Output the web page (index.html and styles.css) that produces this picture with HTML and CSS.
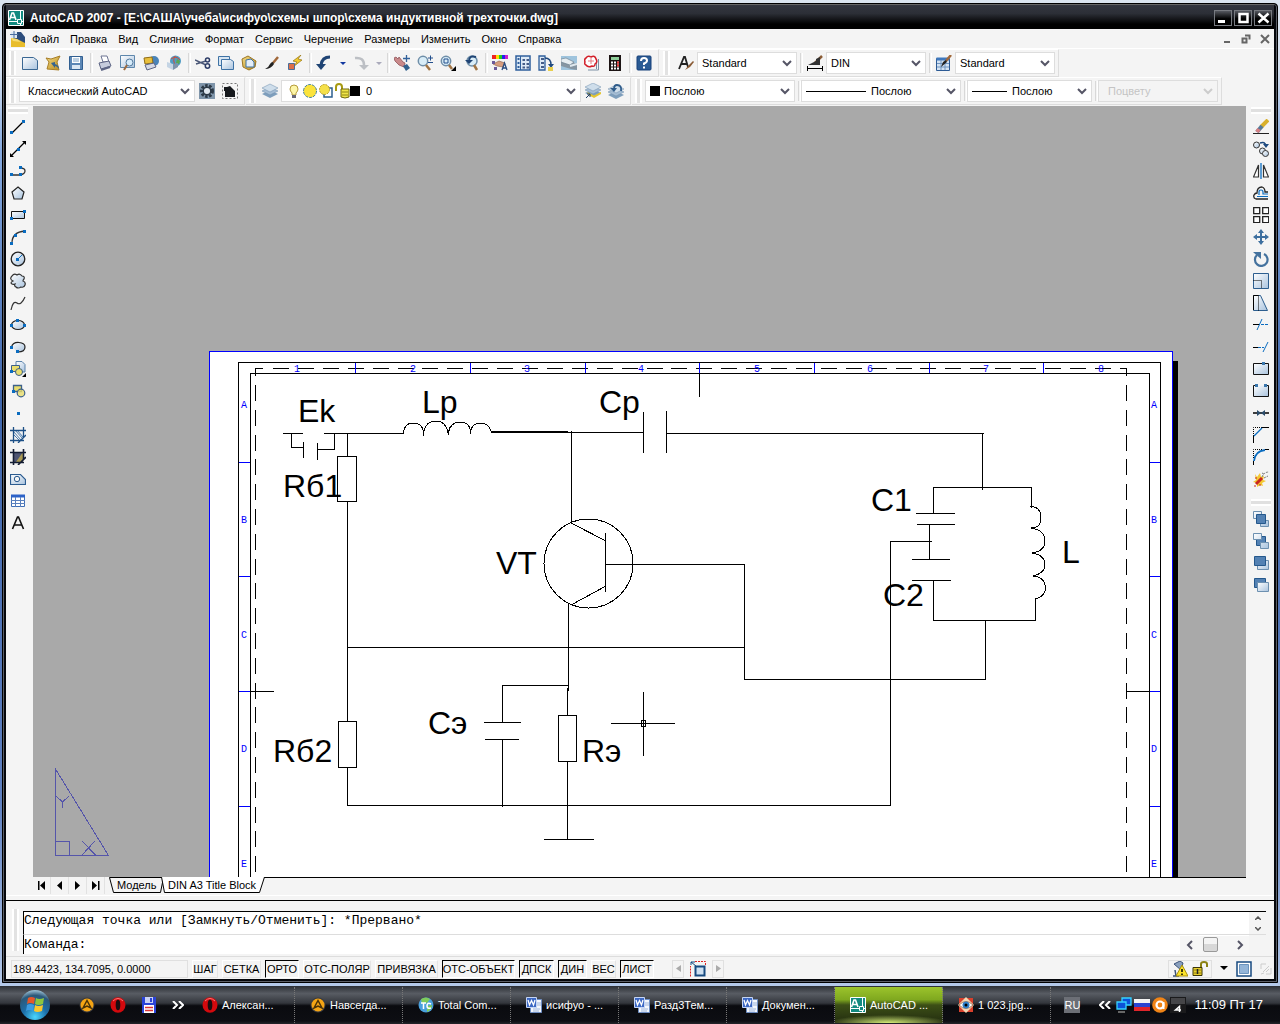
FILE: index.html
```html
<!DOCTYPE html>
<html lang="ru">
<head>
<meta charset="utf-8">
<title>AutoCAD 2007</title>
<link rel="stylesheet" href="styles.css">
</head>
<body>
<svg class="defs" width="0" height="0" aria-hidden="true">
  <defs>
    <linearGradient id="glass" x1="0" y1="0" x2="1" y2="1"><stop offset="0" stop-color="#fff"/><stop offset="1" stop-color="#a9c3de"/></linearGradient>
    <linearGradient id="gold" x1="0" y1="0" x2="1" y2="1"><stop offset="0" stop-color="#f4dc86"/><stop offset="1" stop-color="#b98a1c"/></linearGradient>
    <radialGradient id="orb" cx=".5" cy=".9" r=".9"><stop offset="0" stop-color="#4ad6ff"/><stop offset=".45" stop-color="#1c6ea8"/><stop offset=".8" stop-color="#2c5878"/><stop offset="1" stop-color="#9fc4d8"/></radialGradient>
    <symbol id="cad" viewBox="0 0 16 16"><path fill="#128a80" stroke="#fff" d="M.5.5h15v15H.5z"/><path stroke="#fff" fill="none" d="M12.500 1v8M1 11.500h8M12.500 13v2M14 11.500h1"/><path fill="#128a80" stroke="#fff" d="M9.500 9.500h4v4h-4z"/><path stroke="#fff" stroke-width="1.600" fill="none" d="M1.500 10L4 3h1.500L8 10M3 7.500h4"/></symbol>
    <symbol id="word" viewBox="0 0 16 16"><path fill="#f4f7fc" stroke="#6f8fc4" d="M4.500 2.500h11v13h-11z"/><path stroke="#9db4dc" d="M11 6h4M11 8h4M7 12h7M7 14h6"/><path fill="#3c68c4" stroke="#c5d5f4" d="M.5.5h10v10H.5z"/><path fill="none" stroke="#fff" stroke-width="1.300" d="M2 3l1.500 5L5.500 3.500 7.500 8 9 3"/></symbol>
    <symbol id="opera" viewBox="0 0 16 16"><ellipse cx="8" cy="8" rx="7.500" ry="7.700" fill="#d3090d"/><ellipse cx="8" cy="8" rx="2.300" ry="5.300" fill="#1b0d10"/><path d="M3 4Q8-1 13 4" stroke="#f77" fill="none"/></symbol>
    <symbol id="aimp" viewBox="0 0 16 16"><circle cx="8" cy="8" r="7.500" fill="#3a3a3e"/><circle cx="8" cy="8" r="6.500" fill="#f5a514"/><path d="M4 11l4-7.500L12 11 8 9z" fill="none" stroke="#4a3208" stroke-width="1.500"/></symbol>
    <symbol id="layers" viewBox="0 0 16 16"><path fill="#7f9fbd" d="M0 11l8-4 8 4-8 4z"/><path fill="#a5bdd4" stroke="#6d8dab" stroke-width=".5" d="M0 8l8-4 8 4-8 4z"/><path fill="#cfdeeb" stroke="#6d8dab" stroke-width=".5" d="M0 5l8-4 8 4-8 4z"/></symbol>
    <symbol id="brush" viewBox="0 0 16 16"><path d="M14 2L9 8" stroke="#a1683a" stroke-width="2.500"/><path d="M9 7l1 2Q7 14 1 14q4-2 5-5 1-2 3-2z" fill="#222"/></symbol>
    <symbol id="sheet" viewBox="0 0 16 16"><path fill="url(#glass)" stroke="#3a6793" d="M.5 2.500h11l4 3v9H.5z"/></symbol>
  </defs>
</svg>

<div class="window">
  <header class="titlebar">
    <svg class="ic"><use href="#cad"/></svg>
    <h1>AutoCAD 2007 - [E:\САША\учеба\исифуо\схемы шпор\схема индуктивной трехточки.dwg]</h1>
    <div class="winbtns">
      <button aria-label="Свернуть"><svg width="16" height="14"><path d="M3 10.500h7" stroke="#fff" stroke-width="3"/></svg></button>
      <button aria-label="Развернуть"><svg width="16" height="14"><path d="M4.500 3h8v8h-8z" stroke="#fff" stroke-width="2.500" fill="none"/></svg></button>
      <button aria-label="Закрыть"><svg width="16" height="14"><path d="M3.500 2.500l10 9M13.500 2.500l-10 9" stroke="#fff" stroke-width="2.500"/></svg></button>
    </div>
  </header>

  <nav class="menubar">
    <svg class="ic" viewBox="0 0 16 16"><path fill="#2d4d7c" d="M3 1h8l4 5v8H3z"/><path fill="#dde9f5" d="M1 1h6v6H1z"/><path fill="#e8bd2c" d="M1 7l6 1 8 4v4H1z"/><path fill="#f6dc72" d="M1 7l6 1 4 3-8-1z"/><path d="M4 0v7M0 3.500h8" stroke="#4a6e9f"/></svg>
    <a href="#">Файл</a><a href="#">Правка</a><a href="#">Вид</a><a href="#">Слияние</a><a href="#">Формат</a><a href="#">Сервис</a><a href="#">Черчение</a><a href="#">Размеры</a><a href="#">Изменить</a><a href="#">Окно</a><a href="#">Справка</a>
    <div class="docbtns">
      <button aria-label="Свернуть"><svg width="10" height="10"><path d="M2 8h6" stroke="#666" stroke-width="2"/></svg></button>
      <button aria-label="Восстановить"><svg width="10" height="10"><path d="M1.500 4.500h4v4h-4z M4 1.500h4.500v4" stroke="#666" stroke-width="2" fill="none"/></svg></button>
      <button aria-label="Закрыть"><svg width="10" height="10"><path d="M1 1l8 8M9 1L1 9" stroke="#666" stroke-width="2"/></svg></button>
    </div>
  </nav>

  <div class="toolrow">
    <div class="toolbar">
      <i class="grip"></i>
      <button aria-label="Создать"><svg class="ic"><use href="#sheet"/></svg></button>
      <button aria-label="Открыть"><svg class="ic"><path fill="url(#gold)" stroke="#a77e27" d="M1 3l5 1 9-3-3 6 2 8-12-1 2-7z"/><path d="M6 8l4-1v2q4 1 4 5-2-3-4-3v2z" fill="#35648f"/></svg></button>
      <button aria-label="Сохранить"><svg class="ic"><path fill="#5c87b5" stroke="#315f91" d="M1.500 1.500h13v13h-13z"/><path fill="#fff" d="M4 2h8v6H4z"/><path fill="#dbe7f3" d="M4 10h8v4H4z"/><path d="M5 4h6M5 6h6" stroke="#7ba0c5"/></svg></button>
      <i class="sep"></i>
      <button aria-label="Печать"><svg class="ic"><path fill="#fff" stroke="#6d7593" d="M4 1h6l2 6H6z"/><path fill="#c5cbdc" stroke="#5c6484" d="M2 8l10-2 2 5-10 3z"/><path d="M4 15l9-3" stroke="#5c6484" stroke-width="2"/></svg></button>
      <button aria-label="Просмотр"><svg class="ic"><path fill="url(#glass)" stroke="#5e87ac" d="M.5.500h14v12H.5z"/><circle cx="9.500" cy="7.500" r="3.500" fill="#d6ebfa" stroke="#51789c"/><path d="M7 10l-3 5" stroke="#9c6b41" stroke-width="2"/></svg></button>
      <button aria-label="Публикация"><svg class="ic"><circle cx="11" cy="6" r="5" fill="#4a83b8"/><path fill="#e9bf3d" stroke="#8f6c14" d="M1 3l8-1 1 6-8 1z"/><path fill="#d5d9e6" stroke="#5c6484" d="M2 10l9-2 2 4-9 3z"/></svg></button>
      <button aria-label="3D DWF"><svg class="ic"><circle cx="9.500" cy="6" r="5.500" fill="#4f9cc4"/><path d="M5 4q5-4 9 1M9 1q-3 5 1 10" stroke="#cf4b3a" fill="none"/><path d="M11 4l3 2-1 3-3-1z" fill="#5ba84f"/><path d="M1 7l6 2v6L1 12z" fill="#c4d4e4"/><path d="M7 9l5-1v4l-5 3z" fill="#7d94ab"/></svg></button>
      <i class="sep"></i>
      <button aria-label="Вырезать"><svg class="ic"><path d="M0 5l11 5M1 9l10-3" stroke="#4c5878" stroke-width="1.500"/><circle cx="12.500" cy="5" r="2" fill="none" stroke="#2d3c66" stroke-width="1.500"/><circle cx="12.500" cy="11" r="2.200" fill="none" stroke="#2d3c66" stroke-width="1.500"/></svg></button>
      <button aria-label="Копировать"><svg class="ic"><path fill="#d7e5f2" stroke="#3e72a5" d="M.5 1.500h11v9H.5z"/><path fill="url(#glass)" stroke="#3e72a5" d="M3.500 4.500h9l3 2v8h-12z"/></svg></button>
      <button aria-label="Вставить"><svg class="ic"><path fill="url(#gold)" stroke="#9a7423" d="M1 4l6-3 8 5-1 6-6 3-6-3z"/><path fill="#e4eef8" stroke="#3e72a5" d="M5 5l5-1 3 3v5H5z"/></svg></button>
      <button aria-label="Копирование свойств"><svg class="ic"><use href="#brush"/></svg></button>
      <button aria-label="Редактор блоков"><svg class="ic"><path fill="#f2cc2e" stroke="#967411" stroke-width=".7" d="M14 0L6 6l4 1-4 5 9-7-4-1z"/><path fill="#dd7048" stroke="#4a6d98" d="M1.500 8.500h6v6h-6z"/></svg></button>
      <i class="sep"></i>
      <button aria-label="Отменить"><svg class="ic"><path d="M14 2Q6 2 5 10" fill="none" stroke="#1f4474" stroke-width="3"/><path d="M0 9h10l-5 6z" fill="#1f4474"/></svg></button>
      <button class="drop" aria-label="Список отмены"><svg width="7" height="5"><path d="M1 1h6L4 4z" fill="#1238a0"/></svg></button>
      <button aria-label="Повторить"><svg class="ic"><path d="M2 3Q11 2 11 10" fill="none" stroke="#bcbfc4" stroke-width="2.500"/><path d="M6 10h10l-5 5z" fill="#bcbfc4"/></svg></button>
      <button class="drop drop2" aria-label="Список повтора"><svg width="7" height="5"><path d="M1 1h6L4 4z" fill="#aab"/></svg></button>
      <i class="sep"></i>
      <button aria-label="Панорамирование"><svg class="ic"><path d="M0 3l2-1 2 2 1-2 4 5 2 1-1 4-5-2-4-4z" fill="#c9898a" stroke="#8f5358" stroke-width=".8"/><path d="M9 11l4-2 3 4-4 3z" fill="#31618e"/><path d="M12.500 0v7M9 3.500h7" stroke="#32619a" stroke-width="1.300"/></svg></button>
      <button aria-label="Зум реального времени"><svg class="ic"><circle cx="6" cy="6" r="4.700" fill="#d9edf8" stroke="#6f8ea8" stroke-width="1.500"/><path d="M9 10l4 5" stroke="#a17545" stroke-width="2.500"/><path d="M11 3h5M13.500.500v5M11 7.500h5" stroke="#234f8c"/></svg></button>
      <button aria-label="Показать рамкой"><svg class="ic"><circle cx="6" cy="6" r="4.700" fill="#d9edf8" stroke="#6f8ea8" stroke-width="1.500"/><path d="M4 4h4v4H4z" fill="none" stroke="#234f8c"/><path d="M9 10l3 4" stroke="#a17545" stroke-width="2.500"/><path d="M16 11v5h-5z"/></svg></button>
      <button aria-label="Показать предыдущий"><svg class="ic"><circle cx="9" cy="6" r="5" fill="#d9edf8" stroke="#6f8ea8" stroke-width="1.500"/><path d="M13 2Q6 0 6 6" stroke="#1f4474" stroke-width="2" fill="none"/><path d="M2 5h8l-4 4z" fill="#1f4474"/><path d="M11 10l3 5" stroke="#a17545" stroke-width="2.500"/></svg></button>
      <i class="sep"></i>
      <button aria-label="Свойства"><svg class="ic"><path d="M0 0h4v4H0z" fill="#e22"/><path d="M4 0h3v4H4z" fill="#fd0"/><path d="M7 0h3v4H7z" fill="#2c2"/><path d="M10 0h3v4h-3z" fill="#22e"/><path d="M13 0h3v4h-3z" fill="#c2c"/><path d="M1 9l6-3 6 2-2 4-6-1z" fill="#d79d7e" stroke="#8a5a46" stroke-width=".6"/><path d="M0 6h3v3H0zM2 12h3v3H2z" fill="#6b5a9a"/><path d="M10 15l2.500-7 2.500 7M11 13h3" stroke="#2a4d80" stroke-width="1.300" fill="none"/></svg></button>
      <button aria-label="Центр управления"><svg class="ic"><path fill="#dce9f6" stroke="#2f5f9c" stroke-width="1.500" d="M1 1h14v14H1z"/><path d="M5.500 1v14" stroke="#2f5f9c"/><path d="M2.500 4h2M2.500 8h2M2.500 12h2" stroke="#2f5f9c" stroke-width="2"/><path d="M7.500 5h2.500M11.500 5H14M7.500 9h2.500M11.500 9H14M7.500 12.500h2.500M11.500 12.500H14" stroke="#445c88" stroke-width="2"/></svg></button>
      <button aria-label="Инструментальные палитры"><svg class="ic"><path fill="#dce9f6" stroke="#2f5f9c" stroke-width="1.300" d="M1 1h6v14H1z"/><path d="M3 4h3M3 8h3M3 12h3" stroke="#445c88" stroke-width="2"/><path d="M7 3q6 0 6 7" stroke="#214a7f" stroke-width="1.500" fill="none"/><path d="M10 9h6l-3 4z" fill="#214a7f"/><path d="M10 12h5v4h-5z" fill="#e8cf4e"/></svg></button>
      <button aria-label="Подшивки"><svg class="ic"><path fill="#9fc4dd" d="M0 1h16v14H0z"/><path d="M0 6l4-2 12 5v6l-6-1L0 11z" fill="#8696a3"/><path d="M0 4l5-1 8 4-4 3-9-3z" fill="#e6edf1" stroke="#64798a" stroke-width=".6"/><path d="M9 11l7-2" stroke="#dfe8ee" stroke-width="2"/></svg></button>
      <button aria-label="Пометки"><svg class="ic"><path d="M14.500 4v11H4M12.500 14V4" stroke="#7c8fa3" fill="none"/><path fill="#fff" stroke="#d3202a" stroke-width="1.500" d="M2 3q2-3 5-1 4-2 5 2 2 3-1 5 0 3-3 2-4 2-6-1Q0 9 1 7 0 4 2 3z"/><path d="M4 6h6M7 3v6" stroke="#e67c80"/></svg></button>
      <button aria-label="Калькулятор"><svg class="ic"><path fill="#1c1414" d="M2 0h12v16H2z"/><path fill="#8fce9a" d="M4 2h8v3H4z"/><path d="M4 7.500h8M4 10.500h8M4 13.500h8" stroke="#fff" stroke-width="2" stroke-dasharray="2 1"/><path d="M10 7.500h2M10 10.500h2" stroke="#e33" stroke-width="2"/></svg></button>
      <i class="sep"></i>
      <button aria-label="Справка"><svg class="ic"><rect x="1" y="1" width="14" height="14" rx="1" fill="#2a5b94" stroke="#17407a"/><path d="M5 6q0-3 3-3t3 2.500q0 2-3 3V10M8 11.500v2" stroke="#fff" stroke-width="2" fill="none"/></svg></button>
    </div>
    <div class="toolbar styles">
      <i class="grip"></i>
      <button aria-label="Текстовые стили"><svg class="ic"><path d="M1 14L6 2h1l3 10M3 9h6" stroke="#222" stroke-width="1.800" fill="none"/><path d="M15 6l-5 5-3 4 5-3 4-5z" fill="#8a5b35"/></svg></button>
      <select class="box w100" aria-label="Текстовый стиль"><option>Standard</option></select>
      <i class="sep"></i>
      <button aria-label="Размерные стили"><svg class="ic"><path d="M15 1L8 8" stroke="#8a5b35" stroke-width="2.500"/><path d="M1 10l8-4v4zM9 10V4l4-2v8z" fill="#333"/><path d="M0 13.500h16M.5 11v5M15.500 11v5" stroke="#000"/></svg></button>
      <select class="box w100" aria-label="Размерный стиль"><option>DIN</option></select>
      <i class="sep"></i>
      <button aria-label="Стили таблиц"><svg class="ic"><path fill="#d3e2f2" stroke="#2c5a94" d="M.5 3.500h13v12H.5z"/><path d="M.5 4h13" stroke="#3f78bd" stroke-width="3"/><path d="M1 8.500h12M1 12h12M5 5v10M9 5v10" stroke="#6e94c0"/><path d="M15 0l-5 6" stroke="#a1683a" stroke-width="2.500"/><path d="M10 5l1 2-6 5 2-5z" fill="#222"/></svg></button>
      <select class="box w100" aria-label="Стиль таблиц"><option>Standard</option></select>
    </div>
  </div>

  <div class="toolrow">
    <div class="toolbar">
      <i class="grip"></i>
      <select class="box workspace-pick" aria-label="Рабочее пространство"><option>Классический AutoCAD</option></select>
      <button aria-label="Параметры пространства"><svg class="ic"><path fill="#7f95aa" d="M0 0h16v16H0z"/><circle cx="8" cy="8" r="5.500" fill="none" stroke="#2c3946" stroke-width="3" stroke-dasharray="2.500 1.400"/><circle cx="8" cy="8" r="3.800" fill="#dfe7ee" stroke="#2c3946" stroke-width="1.500"/></svg></button>
      <button aria-label="Моё пространство"><svg class="ic"><path d="M.5.500h15v15H.5z" fill="none" stroke="#777" stroke-dasharray="2 2"/><path d="M2 8V4h3l3-1 5 5v6H3V8z" fill="#16191d"/></svg></button>
    </div>
    <div class="toolbar">
      <i class="grip"></i>
      <button aria-label="Диспетчер слоев"><svg class="ic"><use href="#layers"/></svg></button>
      <div class="box layer-pick">
        <svg class="ic"><path d="M4 6a4 4 0 0 1 8 0q0 2-2 4v2H6v-2Q4 8 4 6z" fill="#fdf6a8" stroke="#b59b3b"/><path d="M6 13.500h4" stroke="#667" stroke-width="3"/></svg>
        <svg class="ic"><circle cx="8" cy="8" r="6.500" fill="#fbe33c" stroke="#3f7e9c" stroke-dasharray="3 1"/></svg>
        <svg class="ic"><path d="M6 5h8v9H6z" fill="#fff" stroke="#2d5f8e" stroke-width="1.500"/><circle cx="6.500" cy="6.500" r="5" fill="#f5e04a" stroke="#b59b1b" stroke-dasharray="2 1"/></svg>
        <svg class="ic"><path d="M2 8V4q0-3 3-3t3 3v5" stroke="#a79a12" stroke-width="2" fill="none"/><path fill="#f0e548" stroke="#6e660c" d="M7 6h8v8l-4 1-4-1z"/><path d="M8 9h6M8 12h6" stroke="#8f8616"/></svg>
        <i class="swatch"></i>
        <select aria-label="Слой"><option>0</option></select>
      </div>
      <button aria-label="Сделать слой текущим"><svg class="ic"><use href="#layers" y="-1"/><path d="M2 9l7 3.500 7-3.500v2l-7 4-5-3z" fill="#e6c62f"/><path d="M1 15l4-4M2 11h3v3" stroke="#1d3c66" fill="none"/></svg></button>
      <button aria-label="Предыдущий слой"><svg class="ic"><use href="#layers" y="1"/><path d="M13 8q1-6-4-6-3 0-3 4" stroke="#2f5c8b" stroke-width="1.800" fill="none"/><path d="M2 5h7l-3 4z" fill="#2f5c8b"/></svg></button>
    </div>
    <div class="toolbar props">
      <i class="grip"></i>
      <div class="box w150"><i class="swatch"></i><select aria-label="Цвет"><option>Послою</option></select></div>
      <i class="sep"></i>
      <div class="box w160"><i class="line line60"></i><select aria-label="Тип линии"><option>Послою</option></select></div>
      <i class="sep"></i>
      <div class="box w125"><i class="line line35"></i><select aria-label="Вес линии"><option>Послою</option></select></div>
      <i class="sep"></i>
      <select class="box w120" aria-label="Стиль печати" disabled><option>Поцвету</option></select>
    </div>
  </div>

  <main class="workspace">
    <div class="side">
      <i class="hgrip"></i>
      <button aria-label="Отрезок"><svg class="ic"><path d="M2 14L14 2" stroke="#000" stroke-width="1.300"/><path d="M0 12h3v3H0zM12 1h3v3h-3z" fill="#0a6cc0"/></svg></button>
      <button aria-label="Прямая"><svg class="ic"><path d="M1 15L15 1" stroke="#000" stroke-width="1.300"/><path d="M0 16v-4l4 4zM16 0v4l-4-4z"/><path d="M7 7h3v3H7z" fill="#0a6cc0"/></svg></button>
      <button aria-label="Полилиния"><svg class="ic"><path d="M1 12h9q5-1 5-4t-5-3" stroke="#333" fill="none" stroke-width="1.300"/><path d="M0 10h3v3H0zM9 10h3v3H9zM9 3h3v3H9z" fill="#0a6cc0"/></svg></button>
      <button aria-label="Многоугольник"><svg class="ic"><path d="M8 2l6 5-2 7H4L2 7z" fill="url(#glass)" stroke="#222" stroke-width="1.200"/></svg></button>
      <button aria-label="Прямоугольник"><svg class="ic"><path d="M1.500 4.500h13v7h-13z" fill="url(#glass)" stroke="#111"/><path d="M0 10h3v3H0zM13 3h3v3h-3z" fill="#0a6cc0"/></svg></button>
      <button aria-label="Дуга"><svg class="ic"><path d="M2 14Q2 3 15 2" stroke="#333" fill="none" stroke-width="1.300"/><path d="M0 13h3v3H0zM4 5h3v3H4zM13 1h3v3h-3z" fill="#0a6cc0"/></svg></button>
      <button aria-label="Круг"><svg class="ic"><circle cx="8" cy="8" r="6.800" fill="url(#glass)" stroke="#222" stroke-width="1.300"/><path d="M8 8l4-4" stroke="#0a6cc0"/><path d="M6 7h3v3H6z" fill="#0a6cc0"/></svg></button>
      <button aria-label="Облако"><svg class="ic"><path d="M3 8Q-1 6 2 3q2-3 5-1 3-2 5 1 3 0 2 3-1 1-1 2 3 1 2 4-1 3-4 2-3 2-5 0-2-1-1-3-3 1-4-1 0-1 2-2z" fill="url(#glass)" stroke="#333" stroke-width="1.200"/></svg></button>
      <button aria-label="Сплайн"><svg class="ic"><path d="M1 15Q3 5 7 8t8-6" stroke="#333" fill="none" stroke-width="1.200"/></svg></button>
      <button aria-label="Эллипс"><svg class="ic"><ellipse cx="8" cy="8" rx="6.500" ry="4.500" fill="url(#glass)" stroke="#222" stroke-width="1.200"/><path d="M0 7h3v3H0zM13 7h3v3h-3zM6 2h3v3H6z" fill="#0a6cc0"/></svg></button>
      <button aria-label="Эллиптическая дуга"><svg class="ic"><path d="M1.500 8Q3 3 9 3.500q6 .5 6 4.500 0 5-7 5" fill="url(#glass)" stroke="#222" stroke-width="1.200"/><path d="M0 7h3v3H0zM6 11h3v3H6z" fill="#0a6cc0"/></svg></button>
      <button aria-label="Вставить блок"><svg class="ic"><path d="M6 .5h6l3 3V11H6z" fill="url(#glass)" stroke="#5b83ab"/><path d="M1.500 4.500h8v6h-8z" fill="#e9dd6d" stroke="#3d618a"/><circle cx="9" cy="11" r="3.500" fill="#e9dd6d" stroke="#3d618a"/><path d="M0 9h3v3H0z" fill="#0a6cc0"/><path d="M16 12v4h-4z"/></svg></button>
      <button aria-label="Создать блок"><svg class="ic"><path d="M3.500 2.500h8v6h-8z" fill="#e9dd6d" stroke="#3d618a" stroke-width="1.300"/><circle cx="11" cy="10" r="3.800" fill="#e9dd6d" fill-opacity=".8" stroke="#3d618a" stroke-width="1.200"/><path d="M2 7h3v3H2z" fill="#0a6cc0"/></svg></button>
      <button aria-label="Точка"><svg class="ic"><path d="M7 7h3v3H7z" fill="#0a6cc0"/></svg></button>
      <button aria-label="Штриховка"><svg class="ic"><path d="M3 4l8 9M5 3l8 9M7 3l6 7M3 7l6 6" stroke="#4b7bae"/><path d="M0 3.500h16M0 13.500h14M3.500 0v16M13.500 0v11M8 16l8-8" stroke="#1c4f86" stroke-width="1.300"/></svg></button>
      <button aria-label="Градиент"><svg class="ic"><path d="M3 3h10v10H3z" fill="#4d5472"/><path d="M13 3v10H6z" fill="#aa9a53"/><path d="M0 3.500h16M0 13.500h14M3.500 0v16M13.500 0v11M8 16l8-8" stroke="#131c33" stroke-width="1.600"/></svg></button>
      <button aria-label="Область"><svg class="ic"><path d="M.5 3.500h10l5 5v5H.5z" fill="url(#glass)" stroke="#2c5c90" stroke-width="1.200"/><circle cx="7" cy="8" r="2.700" fill="#f4f4f4" stroke="#2c5c90"/></svg></button>
      <button aria-label="Таблица"><svg class="ic"><path d="M1.500 2.500h13v11h-13z" fill="#fff" stroke="#3f6eb5"/><path d="M1 3h14" stroke="#2c62c8" stroke-width="3"/><path d="M1 7.500h14M1 10.500h14M5.500 4v10M10.500 4v10" stroke="#5a80bd"/></svg></button>
      <button aria-label="Многострочный текст"><svg class="ic"><path d="M2.500 14L7.500 2h1l5 12M4.500 10h7" stroke="#111" stroke-width="1.600" fill="none"/></svg></button>
    </div>

    <section class="center">
      <svg class="canvas" role="img" aria-label="Схема индуктивной трехточки">
        <g transform="translate(-33 -106)">
          <g shape-rendering="crispEdges" fill="none" stroke="#000">
            <path fill="#000" stroke="none" d="M1173 361h5v600h-5z"/>
            <path fill="#fff" stroke="#00f" d="M209.500 960V351.500h963V960"/>
            <path d="M238.500 960V362.500h922V960M250.500 960V373.500h899V960"/>
            <path d="M255.500 376v-7.500h7M1126.500 376v-7.500h-7"/>
            <path d="M273 368.500h838" stroke-dasharray="16 8.900"/>
            <path d="M255.500 385v492M1126.500 385v492" stroke-dasharray="16 8.800"/>
            <path stroke="#00f" d="M355.500 363v10M470.500 363v10M585.500 363v10M699.500 363v10M814.500 363v10M929.500 363v10M1043.500 363v10M239 462.500h11M239 576.500h11M239 691.500h11M239 806.500h11M1150 462.500h10M1150 576.500h10M1150 691.500h10M1150 806.500h10"/>
            <path d="M699.500 374v23M251 691.500h23M1126 691.500h24"/>
            <path d="M283 433.500h20M324 433.500h79M291.500 433v14.500h12M303.500 442v16M317.500 443v17M317 449.500h17.500V433M347.500 433v23M337.500 456.500h19v45h-19zM347.500 502v219M338.500 721.500h18v46h-18zM347.500 768v37.500h543V541.500h41M347 647.500h398"/>
            <path d="M491 432h77" stroke-width="2"/>
            <path d="M568 432.500h75M571.500 431v92M605.500 533v59M605 564.500h139.500v115h241V620M568.500 603v88M643.500 412v41M666.500 411v42M666 433.500h318M982.500 433v57M933.500 513v-25.500h98V508M916 513.500h39M917 524.500h38M929.500 524v36M912 559.500h38M912 580.500h39M933.500 580v40.500h102V599M568 685.500h-65.500V722M484 722.500h37M485 739.500h34M502.500 739v68M567.500 688v27M558.500 715.500h18v46h-18zM567.500 762v77M544 839.500h50"/>
            <path d="M403.500 434q0-11 10-11t10.500 13M423.500 433q2-12 12.500-12t12.500 14M448.500 432q2-10 12-10t10 12M470.500 431q2-8 10-8t11 9M571 523l35 18M606 586l-35 19"/>
            <circle cx="588.500" cy="563.500" r="44.500"/>
            <path d="M1030 506.500q11 0 11 11t-10 10M1031 528q14 2 14 13 0 10-13 12M1032 553q13 2 13 12 0 8-12 11M1033 576q12 1 12.500 12 0 8-10 11"/>
            <path d="M643.500 692v64M611 723.500h64M641.500 720.500h4v6h-4z"/>
            <path stroke="#55a" d="M55.500 769v86.500h53zM56 841.500h13.500V855M56 796l6.500 6 6.500-6M62.500 802v6M82 841l13.500 14M95 841l-13 14"/>
          </g>
          <g class="zone">
            <text x="297" y="372">1</text><text x="413" y="372">2</text><text x="527" y="372">3</text><text x="641" y="372">4</text><text x="757" y="372">5</text><text x="870" y="372">6</text><text x="986" y="372">7</text><text x="1101" y="372">8</text>
            <text x="244" y="408">A</text><text x="244" y="523">B</text><text x="244" y="638">C</text><text x="244" y="752">D</text><text x="244" y="867">E</text>
            <text x="1154" y="408">A</text><text x="1154" y="523">B</text><text x="1154" y="638">C</text><text x="1154" y="752">D</text><text x="1154" y="867">E</text>
          </g>
          <g class="label">
            <text x="298" y="422">Ek</text><text x="422" y="413">Lp</text><text x="599" y="413">Cp</text><text x="283" y="497">Rб1</text><text x="496" y="574">VT</text><text x="871" y="511">C1</text><text x="883" y="606">C2</text><text x="1062" y="563">L</text><text x="428" y="734">Cэ</text><text x="582" y="762">Rэ</text><text x="273" y="762">Rб2</text>
          </g>
        </g>
      </svg>
      <div class="tabs">
        <button class="nav" aria-label="Первый"><svg width="9" height="9"><path d="M1 0h1.500v9H1zM8 0v9L3 4.500z"/></svg></button>
        <button class="nav" aria-label="Назад"><svg width="9" height="9"><path d="M7 0v9L2 4.500z"/></svg></button>
        <button class="nav" aria-label="Вперед"><svg width="9" height="9"><path d="M2 0v9l5-4.500z"/></svg></button>
        <button class="nav" aria-label="Последний"><svg width="9" height="9"><path d="M1 0v9l5-4.500zM7 0h1.500v9H7z"/></svg></button>
        <a class="tab model" href="#"><svg class="edge" width="54" height="16"><path d="M.5.500l4 15h47l3-15z" fill="#f4f4f4" stroke="#000"/></svg>Модель</a>
        <a class="tab active" href="#"><svg class="edge" width="104" height="16"><path d="M.5 0l3 15.500h95L103.500 0" fill="#fff" stroke="#000"/></svg>DIN A3 Title Block</a>
        <i class="tabfill"></i>
      </div>
    </section>

    <div class="side right">
      <i class="hgrip"></i>
      <button aria-label="Стереть"><svg class="ic"><path d="M0 14.500h16" stroke="#222"/><path d="M15 1L8 8" stroke="#d8b02c" stroke-width="4"/><path d="M9 7l-5 6" stroke="#557a9a" stroke-width="4"/><path d="M6 10l-2 3" stroke="#d67f83" stroke-width="4"/></svg></button>
      <button aria-label="Копировать"><svg class="ic"><circle cx="3.500" cy="4" r="3" fill="url(#glass)" stroke="#333"/><circle cx="9.500" cy="10" r="3" fill="url(#glass)" stroke="#333"/><circle cx="12.500" cy="12.500" r="3" fill="url(#glass)" stroke="#333"/><path d="M7 2q5-2 6 3" stroke="#1e4a80" stroke-width="1.500" fill="none"/><path d="M10 3h6l-3 4z" fill="#1e4a80"/></svg></button>
      <button aria-label="Зеркало"><svg class="ic"><path d="M5.500 2v12h-5zM10.500 2v12h5z" fill="#fff" stroke="#333" stroke-width="1.200"/><path d="M8 0v16" stroke="#0a6cc0" stroke-width="1.300"/></svg></button>
      <button aria-label="Подобие"><svg class="ic"><path d="M15 14H3q-3-1-2-4 1-2 3-2 0-6 5-6 3 1 3 5h3" fill="none" stroke="#222" stroke-width="1.300"/><path d="M15 11.500H4M6 10V7q0-2 2-2t2 2v2h5" fill="none" stroke="#0a6cc0" stroke-width="1.200"/></svg></button>
      <button aria-label="Массив"><svg class="ic"><path d="M.7.700h6v6h-6zM9.700.700h6v6h-6zM.7 9.700h6v6h-6zM9.700 9.700h6v6h-6z" fill="#fff" stroke="#222" stroke-width="1.300"/></svg></button>
      <button aria-label="Перенести"><svg class="ic"><path d="M8 2v12M2 8h12" stroke="#3d6f9f" stroke-width="2"/><path d="M8 0l3 4H5zM8 16l3-4H5zM0 8l4-3v6zM16 8l-4-3v6z" fill="#3d6f9f"/></svg></button>
      <button aria-label="Повернуть"><svg class="ic"><path d="M4 4a6.300 6.300 0 1 0 7-1" fill="none" stroke="#44729e" stroke-width="2.200"/><path d="M0 1h8v7z" fill="#44729e"/></svg></button>
      <button aria-label="Масштаб"><svg class="ic"><path d="M.5.500h15v15H.5z" fill="url(#glass)" stroke="#2d5e8f"/><path d="M.5 7.500h8v8" fill="none" stroke="#000" stroke-dasharray="1 1"/></svg></button>
      <button aria-label="Растянуть"><svg class="ic"><path d="M.5.500h5l2 0 7 15H.5z" fill="url(#glass)" stroke="#2d5e8f"/><path d="M.5 15V.5h5" fill="none" stroke="#000"/><path d="M5.500.500v15" stroke="#000" stroke-dasharray="1 1"/></svg></button>
      <button aria-label="Обрезать"><svg class="ic"><path d="M0 7.500h6" stroke="#000"/><path d="M4 13l5-11" stroke="#0a6cc0"/><path d="M8 7.500h8" stroke="#0a6cc0" stroke-dasharray="3 1"/></svg></button>
      <button aria-label="Удлинить"><svg class="ic"><path d="M0 8.500h5" stroke="#000"/><path d="M5 8.500h6" stroke="#0a6cc0" stroke-dasharray="3 1"/><path d="M10 13l5-10" stroke="#0a6cc0"/></svg></button>
      <button aria-label="Разорвать в точке"><svg class="ic"><path d="M.5 2.500h15v11H.5z" fill="url(#glass)" stroke="#111"/><path d="M9 1h3v3H9z" fill="#3a77ad"/></svg></button>
      <button aria-label="Разорвать"><svg class="ic"><path d="M4 2.500H.5v11h15v-11H12" fill="url(#glass)" stroke="#111"/><path d="M2 1h3v3H2zM11 1h3v3h-3z" fill="#3a77ad"/></svg></button>
      <button aria-label="Соединить"><svg class="ic"><path d="M0 8h16" stroke="#000" stroke-width="1.500"/><path d="M4 5l4 3-4 3zM12 5L8 8l4 3z" fill="#2b4c6b"/></svg></button>
      <button aria-label="Фаска"><svg class="ic"><path d="M.5 16V9M9 .5h7" stroke="#000"/><path d="M.5 9V.5H9" fill="none" stroke="#000" stroke-dasharray="1 1"/><path d="M1 9l8-8" stroke="#0a6cc0" stroke-width="1.300"/></svg></button>
      <button aria-label="Сопряжение"><svg class="ic"><path d="M.5 16v-4M12 .5h4" stroke="#000"/><path d="M.5 9V.5H9" fill="none" stroke="#000" stroke-dasharray="1 1"/><path d="M1 12Q2 2 12 1" fill="none" stroke="#0a6cc0" stroke-width="1.800"/></svg></button>
      <button aria-label="Расчленить"><svg class="ic"><path d="M2 3l2 3 3-4 1 4 3-1-1 4 3 1-4 2 1 3-3-1-3 2v-4L0 11l3-2z" fill="#f3c832"/><path d="M3 13l6-6" stroke="#c8261f" stroke-width="3"/><path d="M2 7h2M6 14h2M1 15h2" stroke="#c8261f"/><path d="M9 6q2-5 7-5M11 7l4-2M9 2l2 1" stroke="#777" fill="none" stroke-dasharray="2 1"/></svg></button>
      <i class="hgrip second"></i>
      <button aria-label="На передний план"><svg class="ic"><path d="M.5.500h8v7h-8zM7.500 9.500h8v6h-8z" fill="url(#glass)" stroke="#6d90b0"/><path d="M3.500 3.500h9v9h-9z" fill="#5381b3" stroke="#25588c"/></svg></button>
      <button aria-label="На задний план"><svg class="ic"><path d="M3.500 3.500h9v9h-9z" fill="#5381b3" stroke="#25588c"/><path d="M.5.500h8v6h-8zM7.500 9.500h8v6h-8z" fill="url(#glass)" stroke="#6d90b0"/></svg></button>
      <button aria-label="Перед объектом"><svg class="ic"><path d="M4.500 5.500h11v9h-11z" fill="url(#glass)" stroke="#6d90b0"/><path d="M1.500 1.500h11v9h-11z" fill="#5381b3" stroke="#25588c"/></svg></button>
      <button aria-label="За объектом"><svg class="ic"><path d="M1.500 1.500h11v9h-11z" fill="#5381b3" stroke="#25588c"/><path d="M4.500 5.500h11v9h-11z" fill="url(#glass)" stroke="#6d90b0"/></svg></button>
    </div>
  </main>

  <section class="dock">
    <i class="grip"></i>
    <div class="console">
      <div class="history"><output>Следующая точка или [Замкнуть/Отменить]: *Прервано*</output>
        <div class="vscroll"><svg width="6" height="4"><path d="M0 4l3-3 3 3" stroke="#555" stroke-width="1.500" fill="none"/></svg><svg width="6" height="4"><path d="M0 0l3 3 3-3" stroke="#555" stroke-width="1.500" fill="none"/></svg></div>
      </div>
      <div class="prompt"><label for="cmd">Команда:</label><input id="cmd" type="text">
        <div class="hscroll"><svg width="8" height="10"><path d="M6 1L2 5l4 4" stroke="#556" stroke-width="2" fill="none"/></svg><button aria-label="Прокрутка"></button><svg width="8" height="10"><path d="M2 1l4 4-4 4" stroke="#556" stroke-width="2" fill="none"/></svg></div>
      </div>
    </div>
  </section>

  <footer class="status">
    <span class="coords">189.4423, 134.7095, 0.0000</span>
    <button class="m26">ШАГ</button><button class="m39">СЕТКА</button><button class="m34 on">ОРТО</button><button class="m68">ОТС-ПОЛЯР</button><button class="m63">ПРИВЯЗКА</button><button class="m73 on">ОТС-ОБЪЕКТ</button><button class="m35 on">ДПСК</button><button class="m29 on">ДИН</button><button class="m25">ВЕС</button><button class="m34 on">ЛИСТ</button>
    <div class="vp">
      <button aria-label="Предыдущий вид"><svg width="5" height="7"><path d="M5 0v7L0 3.500z" fill="#aaa"/></svg></button>
      <svg class="ic"><path d="M.5 15.500V5M5 .5h10.500V5" stroke="#d22" fill="none" stroke-dasharray="2 1"/><path d="M5.500 5.500h9v9h-9z" fill="#cfe0f0" stroke="#174a80" stroke-width="2"/><path d="M1 1l5 4M1 4V1h4" stroke="#174a80" fill="none"/></svg>
      <button aria-label="Следующий вид"><svg width="5" height="7"><path d="M0 0v7l5-3.500z" fill="#aaa"/></svg></button>
    </div>
    <div class="notify">
      <div class="well">
        <svg class="ic"><path d="M2 3l7 6 2-7-3-2z" fill="#8aa0bd" stroke="#3c5279"/><path d="M1 15h6M3 9l1 6" stroke="#3c5279" stroke-width="1.500"/><path d="M10 4l6 11H4z" fill="#fbe329" stroke="#a58b0d"/><path d="M10 8v3M10 12.500v1.500" stroke="#000" stroke-width="1.500"/></svg>
        <svg class="ic"><path d="M9 7V3q0-2 3-2t3 2v3" stroke="#8a8012" stroke-width="2" fill="none"/><path fill="#e8cf2e" stroke="#3a3407" d="M1 6.500h9v8H1z"/><path d="M1 9h9M1 12h9" stroke="#8f7f14"/><path d="M5.500 8v5" stroke="#222" stroke-width="1.500"/></svg>
      </div>
      <svg width="8" height="5"><path d="M0 0h8L4 4z"/></svg>
      <svg class="ic"><path d="M1 1h14v14H1z" fill="#fff" stroke="#174a80" stroke-width="1.500"/><path d="M3.500 3.500h9v9h-9z" fill="#94b5d8" stroke="#6b93bd"/></svg>
      <svg width="12" height="12"><path d="M1 1h5M1 1v5M11 11H6M11 11V5M3 9l6-6M1 11l3-1M6 9l3-3" stroke="#ccc" fill="none"/></svg>
    </div>
  </footer>
</div>

<div class="taskbar">
  <button class="start" aria-label="Пуск"><svg width="32" height="32"><circle cx="16" cy="16" r="15" fill="url(#orb)"/><path d="M9 9q3-2 7 0l-1 6q-4-2-7 0z" fill="#e5582a"/><path d="M17 9q3 2 8 0l-1 6q-5 2-8 0z" fill="#8cc63f"/><path d="M8 16q3-2 7 0l-1 6q-4-2-7 0z" fill="#3d9be0"/><path d="M16 16q3 2 8 0l-1 6q-5 2-8 0z" fill="#fbc62d"/></svg></button>
  <div class="quick">
    <button aria-label="AIMP"><svg class="ic"><use href="#aimp"/></svg></button>
    <button aria-label="Opera"><svg class="ic"><use href="#opera"/></svg></button>
    <button aria-label="Сохранение"><svg class="ic"><path d="M1 0h14v16H1z" fill="#2b44d8"/><path d="M4 0h8v6H4z" fill="#c9d2f4"/><path d="M9 1h2v4H9z" fill="#2b44d8"/><path d="M3 8h10v8H3z" fill="#fff"/><path d="M4 10.500h8M4 13.500h8" stroke="#d33" stroke-width="1.500"/></svg></button>
    <button aria-label="Ещё"><svg width="12" height="8"><path d="M1 0l4 4-4 4M7 0l4 4-4 4" stroke="#fff" stroke-width="2" fill="none"/></svg></button>
  </div>
  <button class="task"><svg class="ic"><use href="#opera"/></svg>Алексан...</button>
  <button class="task"><svg class="ic"><use href="#aimp"/></svg>Навсегда...</button>
  <button class="task"><svg class="ic"><circle cx="8" cy="8" r="7.500" fill="#4aa0dc"/><path d="M3 2q5-3 9 0l-3 4-5 1zM9 9l5-1q0 5-5 7z" fill="#7ecb5a"/><path d="M3 6h5M5.500 6v6M13 7q-4-2-4 2 0 3 4 2" stroke="#fff" stroke-width="1.500" fill="none"/></svg>Total Com...</button>
  <button class="task"><svg class="ic"><use href="#word"/></svg>исифуо - ...</button>
  <button class="task"><svg class="ic"><use href="#word"/></svg>Разд3Тем...</button>
  <button class="task"><svg class="ic"><use href="#word"/></svg>Докумен...</button>
  <button class="task current"><svg class="ic"><use href="#cad"/></svg>AutoCAD ...</button>
  <button class="task"><svg class="ic"><path d="M1 1h14v14H1z" fill="#d9402c"/><path d="M8 0l8 8-8 8-8-8z" fill="#f2d8b4"/><path d="M1 8q7-7 14 0-7 7-14 0z" fill="#fff" stroke="#8a4a2a" stroke-width=".7"/><circle cx="8" cy="8" r="3.500" fill="#2f7fc8"/><circle cx="8" cy="8" r="1.500"/></svg>1 023.jpg...</button>
  <div class="tray">
    <button class="lang">RU</button>
    <svg class="more" width="12" height="8"><path d="M5 0L1 4l4 4M11 0L7 4l4 4" stroke="#fff" stroke-width="2" fill="none"/></svg>
    <svg class="ic"><path d="M6 1h9v7H6z" fill="#0b52d8" stroke="#36d3ff" stroke-width="1.300"/><path d="M1 5h9v7H1z" fill="#0b52d8" stroke="#36d3ff" stroke-width="1.300"/><path d="M2 15h7" stroke="#666" stroke-width="2"/></svg>
    <svg class="ic"><path d="M0 2h16v4H0z" fill="#f4f4f4"/><path d="M0 6h16v4H0z" fill="#2c45d2"/><path d="M0 10h16v4H0z" fill="#e0252b"/></svg>
    <svg class="ic"><circle cx="8" cy="8" r="7.800" fill="#f08416"/><circle cx="8" cy="8" r="3.500" fill="none" stroke="#fff" stroke-width="2.200"/><path d="M11.500 5v7" stroke="#fff" stroke-width="2"/></svg>
    <svg class="ic"><path d="M0 0h16v16H0z" fill="#1a1a1c"/><path d="M1 1h14v6H1z" fill="#454548"/><path d="M9.500 15V9.500L5.500 13h5.500" stroke="#fff" stroke-width="1.500" fill="none"/></svg>
    <time>11:09 Пт 17</time>
  </div>
</div>
</body>
</html>
```
FILE: styles.css
```css
* { box-sizing: border-box; }

body {
  margin: 0;
  min-height: 100vh;
  display: flex;
  flex-direction: column;
  background: linear-gradient(#dbe5f0 0, #d4e0f0 70px, #86aae0 150px, #3f66ac 400px, #5f80c0 800px, #c6d8f2 100%);
  color: #000;
  font: 11px/14px "Liberation Sans", Arial, sans-serif;
}

.defs { position: absolute; }
button, select, input { font: inherit; color: inherit; margin: 0; padding: 0; border: 0; background: none; border-radius: 0; }
button { display: flex; align-items: center; justify-content: center; flex: none; }
a { color: inherit; text-decoration: none; }
svg { display: block; flex: none; }
.ic { width: 16px; height: 16px; }

.window {
  flex: 1;
  display: flex;
  flex-direction: column;
  margin: 3px 2px 3px 2px;
  padding: 0 3px 3px;
  border: 1px solid #000;
  border-radius: 4px 4px 0 0;
  background: #05070c;
  box-shadow: inset 0 0 0 1px #5b5e66;
}

/* title and menu */
.titlebar {
  display: flex;
  align-items: center;
  height: 25px;
  padding: 1px 2px 0;
  background: linear-gradient(#33363f, #2c2f37 35%, #000 80%);
  border-top: 1px solid #666;
  color: #fff;
}
.titlebar h1 { margin: 0 0 0 6px; font-size: 12px; line-height: 16px; font-weight: bold; white-space: nowrap; }
.winbtns { display: flex; gap: 2px; margin-left: auto; }
.winbtns button { width: 18px; height: 16px; border: 1px solid #777a80; background: linear-gradient(#55585f, #000 55%); }

.menubar { display: flex; align-items: center; gap: 11px; height: 20px; padding: 0 4px; background: #f4f4f4; border-bottom: 1px solid #fff; }
.menubar .ic { margin-right: -5px; }
.docbtns { display: flex; gap: 9px; margin-left: auto; }

/* toolbars */
.toolrow { display: flex; height: 28px; background: #f4f4f4; }
.toolbar { display: flex; align-items: center; padding-left: 3px; padding-right: 3px; border-right: 1px solid #ddd; border-bottom: 1px solid #ddd; border-top: 1px solid #fff; margin-right: 1px; }
.grip { width: 7px; height: 24px; margin-right: 2px; border: solid #fff; border-width: 0 2px; background: #e2e2e2; flex: none; }
.toolbar > button { width: 23px; height: 24px; }
.toolbar > button.drop { width: 14px; }
.toolbar > button.drop2 { width: 12px; }
.sep { width: 6px; height: 20px; border-right: 1px solid #fff; background: linear-gradient(90deg, transparent 3px, #d8d8d8 3px, #d8d8d8 4px, transparent 4px); flex: none; }

.box {
  height: 22px;
  border: 1px solid #ddd;
  background-color: #fff;
  display: flex;
  align-items: center;
}
select {
  appearance: none;
  background: url("data:image/svg+xml,%3Csvg xmlns='http://www.w3.org/2000/svg' width='10' height='7'%3E%3Cpath d='M1 1l4 4 4-4' fill='none' stroke='%23556' stroke-width='2'/%3E%3C/svg%3E") no-repeat right 4px center;
}
select:disabled { color: #c4c4c4; opacity: 1; background-color: #f4f4f4; background-image: url("data:image/svg+xml,%3Csvg xmlns='http://www.w3.org/2000/svg' width='10' height='7'%3E%3Cpath d='M1 1l4 4 4-4' fill='none' stroke='%23ccc' stroke-width='2'/%3E%3C/svg%3E"); }
select.box { padding: 0 20px 0 4px; }
div.box { padding-left: 4px; }
div.box select { flex: 1; height: 20px; padding-left: 4px; }
.styles .grip { margin-right: 4px; }
.props .grip { margin-right: 3px; }
.w100 { width: 100px; }
.w120 { width: 120px; }
.w125 { width: 125px; }
.w150 { width: 150px; }
.w160 { width: 160px; }
select.workspace-pick { width: 176px; margin-left: 1px; padding-left: 8px; }
select.w120 { padding-left: 9px; }
.layer-pick { width: 300px; }
div.layer-pick select { padding-left: 6px; }
.swatch { width: 10px; height: 10px; background: #000; flex: none; }
.line { height: 1px; background: #000; flex: none; }
.line60 { width: 60px; margin-right: 1px; }
.line35 { width: 35px; margin-right: 1px; }

/* drawing area with side toolbars */
.workspace { flex: 1; display: grid; grid-template-columns: 27px 1fr 28px; padding-top: 1px; background: #f4f4f4; border-bottom: 1px solid #fff; }
.side { display: flex; flex-direction: column; align-items: center; padding-right: 3px; }
.side.right { padding: 0 0 0 2px; }
.side button { width: 23px; height: 22px; }
.hgrip { width: 20px; height: 7px; margin: 1px 0 2px; border: solid #fff; border-width: 2px 0; background: #e0e0e0; }
.hgrip.second { margin: 9px 0 2px; }
.center { display: flex; flex-direction: column; min-width: 0; }
.canvas { flex: 1; width: 100%; height: auto; min-height: 0; background: #a9a9a9; overflow: hidden; }
.zone { fill: #00f; font: 10px/12px "Liberation Mono", monospace; text-anchor: middle; }
.label { font: 32px/36px "Liberation Sans", Arial, sans-serif; }

.tabs { display: flex; height: 18px; }
.nav { width: 18px; height: 17px; border-right: 1px solid #e2e2e2; }
.tab { position: relative; z-index: 0; height: 16px; line-height: 16px; white-space: nowrap; }
.edge { position: absolute; left: 0; top: 0; z-index: -1; }
.model { width: 52px; margin-left: 4px; padding-left: 8px; }
.active { width: 103px; padding-left: 7px; }
.tabfill { flex: 1; height: 1px; background: #000; }

/* command line */
.dock { display: flex; align-items: flex-start; height: 57px; margin-top: 4px; padding: 8px 8px 0 6px; background: #f4f4f4; border-top: 1px solid #000; border-bottom: 1px solid #ddd; box-shadow: 0 -4px 0 #f4f4f4; }
.dock .grip { height: 42px; margin: 0 4px 0 0; }
.console { flex: 1; margin-top: 2px; border-top: 1px solid #000; font: 13px/16px "Liberation Mono", "Courier New", monospace; }
.history, .prompt { display: flex; align-items: center; border-left: 1px solid #000; background: #fff; }
.history { height: 23px; border-bottom: 1px solid #ddd; }
.history output { flex: 1; padding-bottom: 4px; }
.prompt { height: 19px; margin-right: 17px; }
.prompt input { flex: 1; outline: 0; }
.vscroll { display: flex; flex-direction: column; justify-content: space-around; align-items: center; width: 17px; height: 22px; background: #f4f4f4; }
.hscroll { display: flex; align-items: center; justify-content: space-between; width: 69px; height: 18px; padding: 0 5px 0 6px; background: #f6f6f6; }
.hscroll button { width: 15px; height: 15px; margin-right: 10px; border: 1px solid #999; border-radius: 2px; background: linear-gradient(#f4f4f4 50%, #d8d8d8 50%); }

/* status bar */
.status { display: flex; align-items: center; gap: 4px; height: 22px; padding: 1px 2px 0 5px; background: #f4f4f4; }
.coords { width: 177px; height: 18px; padding: 1px; border: 1px solid #e0e0e0; }
.status > button { height: 18px; padding-top: 1px; border: 1px solid #e4e4e4; border-top-color: #fff; border-left-color: #fff; white-space: nowrap; }
.status > button.on { border: 1px solid #fff; border-top-color: #000; border-left-color: #000; }
.m25 { width: 25px; } .m26 { width: 26px; } .m29 { width: 29px; } .m34 { width: 34px; } .m35 { width: 35px; }
.m39 { width: 39px; } .m63 { width: 63px; } .m68 { width: 68px; } .m73 { width: 73px; }
.vp { display: flex; align-items: center; gap: 6px; margin-left: 14px; }
.vp button { width: 12px; height: 18px; border: 1px solid #e0e0e0; }
.notify { display: flex; align-items: center; gap: 8px; margin-left: auto; }
.well { display: flex; gap: 4px; height: 18px; padding: 0 3px; border: 1px solid #e0e0e0; }

/* taskbar */
.taskbar { display: flex; align-items: center; height: 38px; background: linear-gradient(#2b2e34, #585c63 20%, #33363c 45%, #0a0b0f 52%, #0d0e13 92%, #24262b); color: #fff; }
.start { margin-left: 19px; width: 32px; }
.quick { display: flex; align-items: center; justify-content: space-between; width: 105px; margin: 0 3px 0 28px; }
.task { width: 108px; height: 36px; justify-content: flex-start; gap: 4px; padding-left: 15px; border-right: 1px dotted #777; white-space: nowrap; }
.current { background: radial-gradient(60px 8px at 50% 100%, #d8f07a, transparent), linear-gradient(#9cc42c, #7fa81f 35%, #3c4f16 50%, #232d10); }
.tray { display: flex; align-items: center; gap: 2px; margin-left: auto; padding-right: 17px; }
.lang { width: 16px; height: 16px; background: #6c6f76; }
.more { margin: 0 3px 0 17px; }
.tray time { margin-left: 6px; font-size: 13px; line-height: 16px; white-space: nowrap; }
```
